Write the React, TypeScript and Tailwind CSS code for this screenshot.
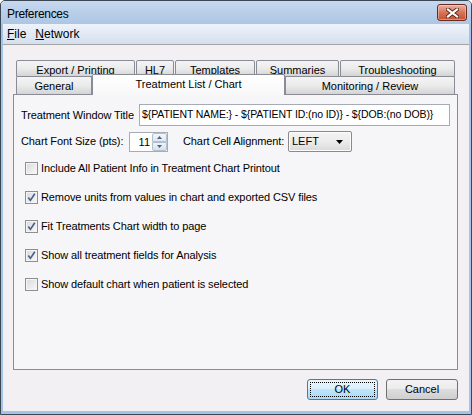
import React from 'react';

const backTabs = [
  { label: 'Export / Printing', w: 'w-[119px]' },
  { label: 'HL7', w: 'w-[38px]' },
  { label: 'Templates', w: 'w-[80px]' },
  { label: 'Summaries', w: 'w-[83px]' },
  { label: 'Troubleshooting', w: 'w-[115px]' },
];

const options = [
  { label: 'Include All Patient Info in Treatment Chart Printout', checked: false },
  { label: 'Remove units from values in chart and exported CSV files', checked: true },
  { label: 'Fit Treatments Chart width to page', checked: true },
  { label: 'Show all treatment fields for Analysis', checked: true },
  { label: 'Show default chart when patient is selected', checked: false },
];

const CloseButton = () => (
  <div className="w-[30px] h-[17px] rounded-[3px] border border-[#6b2b20] bg-linear-to-b from-[#eab1a0] via-[#d6745a] to-[#c4512f] flex items-center justify-center shadow-[inset_0_0_0_1px_rgba(255,255,255,0.35)]">
    <svg width="13" height="10" viewBox="0 0 13 10">
      <path d="M2 1.5 L11 8.5 M11 1.5 L2 8.5" stroke="#5a2418" strokeWidth="4" strokeLinecap="square" />
      <path d="M2 1.5 L11 8.5 M11 1.5 L2 8.5" stroke="#ffffff" strokeWidth="2.2" strokeLinecap="square" />
    </svg>
  </div>
);

const Checkbox = ({ checked }: { checked: boolean }) => (
  <div className="w-[13px] h-[13px] shrink-0 border border-[#8e8f8f] bg-linear-to-br from-[#d9d9d9] to-[#f9f9f9] shadow-[inset_0_0_0_1px_#f4f4f4]">
    {checked && (
      <svg width="11" height="11" viewBox="0 0 11 11">
        <path d="M2.3 5.6 L4.4 8.4 L8.8 1.8" fill="none" stroke="#4b5f8d" strokeWidth="1.7" />
      </svg>
    )}
  </div>
);

const Spinner = () => (
  <div className="w-[39px] h-[20px] border border-[#a5acb5] bg-white flex">
    <div className="flex-1 text-right pr-[2px] leading-[18px]">11</div>
    <div className="w-[15px] flex flex-col">
      <div className="h-[9px] border border-[#b3bfcf] rounded-t-[2px] bg-linear-to-b from-[#f4f7fb] to-[#dfe7f1] flex items-center justify-center">
        <svg width="5" height="3" viewBox="0 0 5 3"><path d="M0 3 L2.5 0 L5 3 Z" fill="#4d6283" /></svg>
      </div>
      <div className="h-[9px] border border-[#b3bfcf] rounded-b-[2px] bg-linear-to-b from-[#eef2f8] to-[#d7e1ed] flex items-center justify-center">
        <svg width="5" height="3" viewBox="0 0 5 3"><path d="M0 0 L2.5 3 L5 0 Z" fill="#4d6283" /></svg>
      </div>
    </div>
  </div>
);

const Combo = () => (
  <div className="w-[64px] h-[21px] rounded-[2px] border border-[#8a8a8a] bg-linear-to-b from-[#f4f4f4] via-[#ececec] to-[#dadada] shadow-[inset_0_0_0_1px_#fbfbfb] flex items-center pl-[3px] pr-[8px]">
    <span>LEFT</span>
    <svg className="ml-auto" width="7" height="4" viewBox="0 0 7 4"><path d="M0 0 L7 0 L3.5 4 Z" fill="#000" /></svg>
  </div>
);

export default function App() {
  return (
    <div className="w-[472px] h-[415px] flex flex-col border border-[#3b4752] rounded-t-[5px] bg-[#a3c4e8] overflow-hidden text-black font-['Liberation_Sans',Arial,sans-serif]">
      {/* Title bar */}
      <div className="h-[23px] shrink-0 flex items-center pl-[6px] pr-[4px] bg-linear-to-b from-[#c6d9ef] via-[#b9cfe8] to-[#adc6e4]">
        <span className="text-[12px] tracking-[-0.3px] pt-[2px]">Preferences</span>
        <div className="ml-auto">
          <CloseButton />
        </div>
      </div>

      <div className="flex-1 flex flex-col mx-[2px] mb-[3px]">
        {/* Menu bar */}
        <div className="h-[21px] shrink-0 flex items-center gap-[9px] pl-[4px] text-[12px] border-b border-[#a3a3a3] bg-linear-to-b from-[#eef3fa] to-[#d5e0ee]">
          <span><span className="underline underline-offset-[1px]">F</span>ile</span>
          <span><span className="underline underline-offset-[1px]">N</span>etwork</span>
        </div>

        {/* Dialog body */}
        <div className="flex-1 bg-[#f2f0f3] pt-[15px] pl-[10px] pr-[11px] text-[11px]">
          {/* Tabs */}
          <div className="ml-[3px] w-[439px]">
            <div className="flex gap-px h-[17px]">
              {backTabs.map((t) => (
                <div
                  key={t.label}
                  className={`${t.w} h-[17px] border border-[#898c95] rounded-t-[2px] bg-linear-to-b from-[#f4f4f4] via-[#ebebeb] to-[#d4d4d4] text-center leading-[14px] pt-[2px] overflow-hidden whitespace-nowrap`}
                >
                  {t.label}
                </div>
              ))}
            </div>
            <div className="relative z-10 flex items-end h-[20px] -mt-[3px]">
              <div className="w-[76px] h-[18px] border-t border-l border-r border-[#898c95] rounded-t-[2px] bg-linear-to-b from-[#f4f4f4] via-[#ebebeb] to-[#d4d4d4] text-center leading-[14px] pt-[2px] whitespace-nowrap">
                General
              </div>
              <div className="w-[193px] h-[21px] -mb-px border-t border-l border-r border-[#898c95] rounded-t-[2px] bg-linear-to-b from-white to-[#f8f7f9] text-center leading-[14px] pt-[2px] whitespace-nowrap">
                Treatment List / Chart
              </div>
              <div className="w-[170px] h-[18px] border-t border-l border-r border-[#898c95] rounded-t-[2px] bg-linear-to-b from-[#f4f4f4] via-[#ebebeb] to-[#d4d4d4] text-center leading-[14px] pt-[2px] whitespace-nowrap">
                Monitoring / Review
              </div>
            </div>
          </div>

          {/* Tab panel */}
          <div className="h-[276px] border border-[#898c95] bg-[#f6f5f7] pt-[9px] pl-[7px] flex flex-col">
            <div className="flex items-center h-[22px]">
              <div className="w-[118px] tracking-[-0.1px]">Treatment Window Title</div>
              <div className="w-[311px] h-[22px] border border-[#a5acb5] bg-white pl-[2px] flex items-center text-[10.5px] tracking-[-0.1px] whitespace-nowrap overflow-hidden">
                {'${PATIENT NAME:} - ${PATIENT ID:(no ID)} - ${DOB:(no DOB)}'}
              </div>
            </div>

            <div className="flex items-center h-[21px] mt-[5px]">
              <div className="w-[108px] tracking-[-0.1px]">Chart Font Size (pts):</div>
              <Spinner />
              <div className="w-[105px] ml-[15px] tracking-[-0.1px]">Chart Cell Alignment:</div>
              <Combo />
            </div>

            <div className="mt-[8px] flex flex-col gap-[12px]">
              {options.map((o) => (
                <div key={o.label} className="flex items-center h-[17px] pl-[4px] gap-[3px] tracking-[-0.1px]">
                  <Checkbox checked={o.checked} />
                  <span>{o.label}</span>
                </div>
              ))}
            </div>
          </div>

          {/* Buttons */}
          <div className="flex justify-end gap-[8px] mt-[9px]">
            <div className="w-[71px] h-[21px] rounded-[3px] border border-[#3c7fb1] bg-[linear-gradient(#e9f5fd,#d9f0fc_50%,#bee6fd_50%,#a9dbf6)] p-[2px]">
              <div className="h-full border border-dotted border-black flex items-center justify-center">OK</div>
            </div>
            <div className="w-[72px] h-[21px] rounded-[3px] border border-[#707070] bg-[linear-gradient(#f3f3f3,#ebebeb_50%,#dddddd_50%,#cfcfcf)] flex items-center justify-center">
              Cancel
            </div>
          </div>
        </div>
      </div>
    </div>
  );
}
